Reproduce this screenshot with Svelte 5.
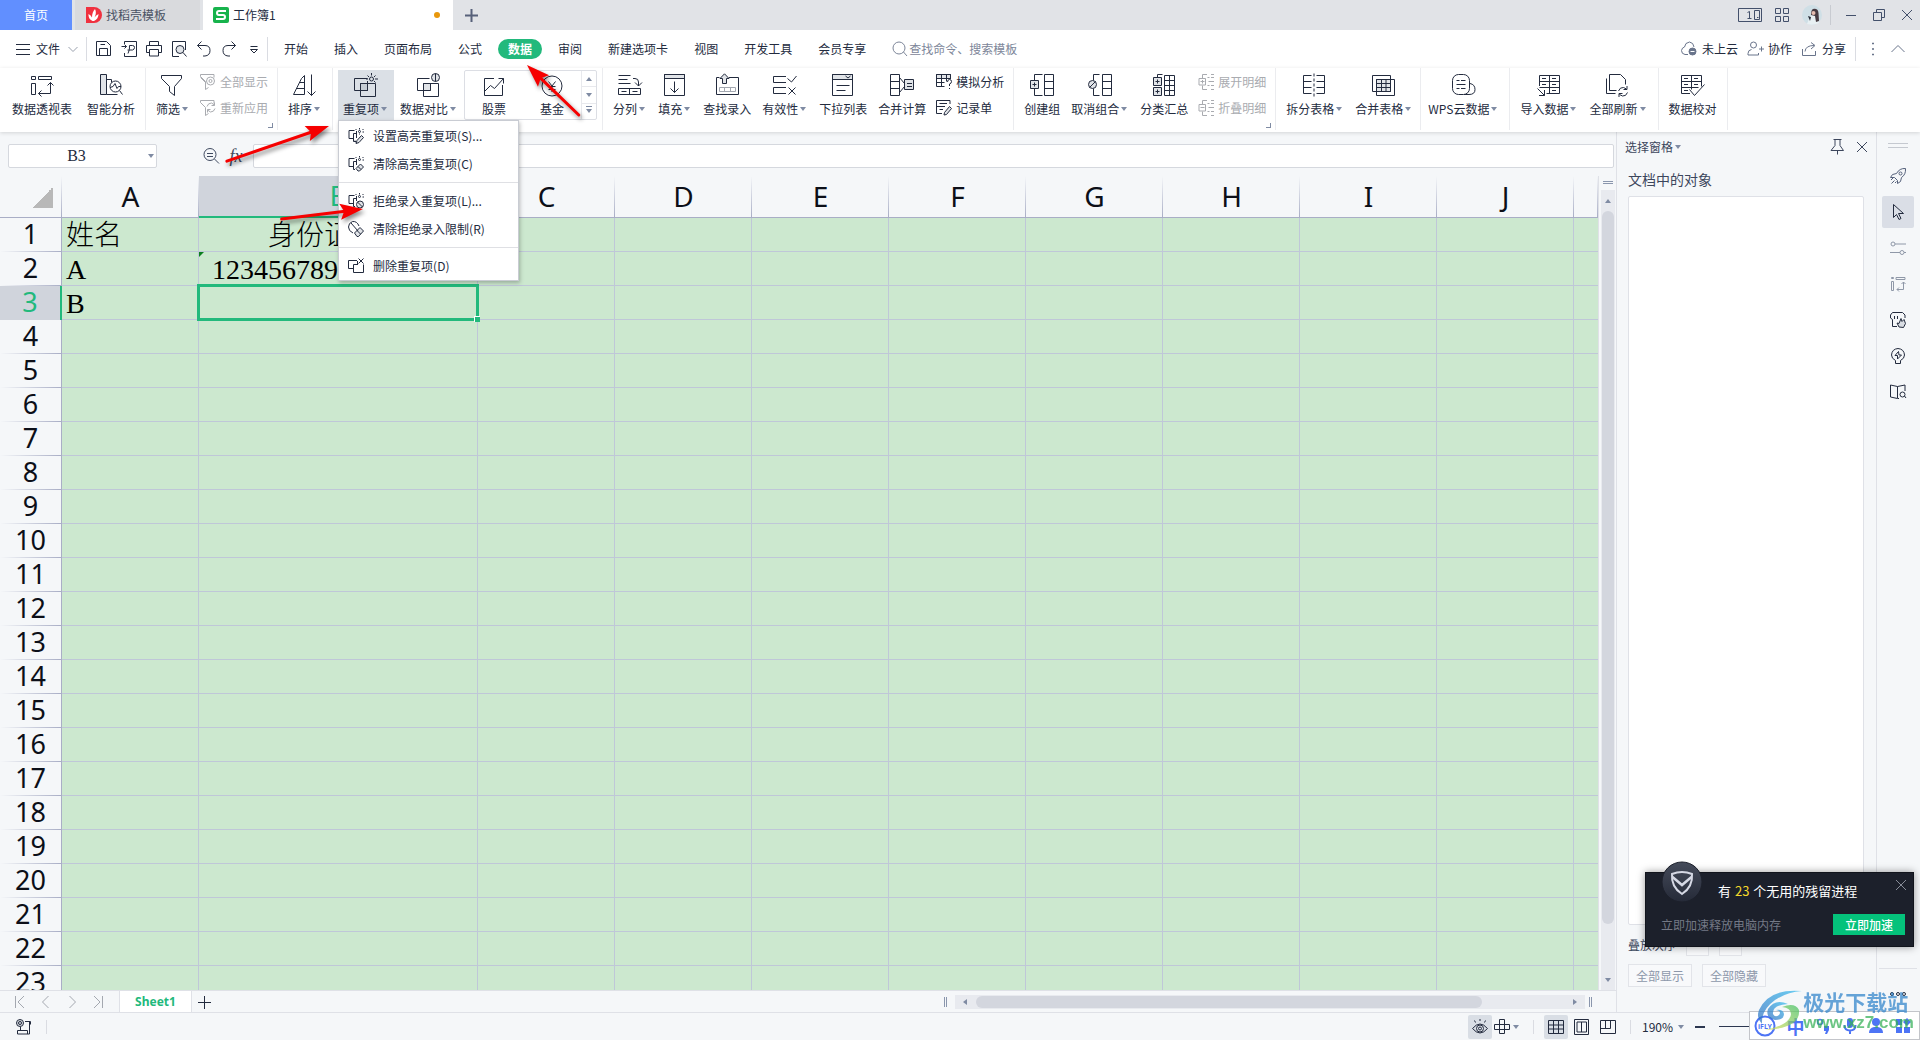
<script lang="ts">
	interface Tool {
		label: string;
		icon: string;
		caret?: boolean;
		active?: boolean;
	}

	const icons: Record<string, string> = {
		pivot: '<path d="M1.5 3.5h4v3h-4zM8.5 3.5h13v3h-13zM1.5 10.5h4v11h-4zM8.5 20.5h12V9.5M11.5 17.5l-3 3 3 3M17.5 12.5l3-3 3 3"/>',
		analyze: '<path class="fill" d="M1.5 1.5h6v20h-6z"/><path d="M7.5 6.5h5M7.5 21.5h11M12.5 6.5v3"/><circle cx="16.5" cy="13.5" r="5.5"/><path d="M20.5 17.5l3 4M11 14.5l3-1 2-3 2 5 1.5-2H22"/>',
		filter: '<path d="M.5 2.5h20v3l-7 8v9l-5-4v-5l-8-8z"/>',
		sort: '<path d="M11.5 2.5v19H.5l8-16zM6.5 9.5h5M3.5 15.5h8M18.5 1.5v21M14.5 18.5l4 4 4-4"/>',
		dup: '<path class="fill" d="M6.5 10.5h7v7h-7z"/><path d="M13.5 5.5H.5v12h6M13.5 8v9.5h-7M6.5 10.5h15v13h-15zM13.5 17.5v-7"/><circle cx="17.5" cy="6" r="2"/><path d="M17.5 0v2.500M12 6h2M21 6h3M13.5 2.5l1.5 1.5M21.5 2.5L20 4M20 8l1.5 1.5"/>',
		compare: '<path class="fill" d="M6.5 10.5h7v7h-7z"/><path d="M12.5 5.5H.5v12h6M6.5 10.5h15v13h-15zM13.5 17.5v-7"/><circle class="fill" cx="18.5" cy="4.5" r="4"/><path d="M18.5.5v8"/>',
		stock: '<path d="M12 5.5H2.5v17h18V12M2.5 18.5l6-6 4 3 9-10M16.5 5.5h5v5"/>',
		fund: '<circle cx="12" cy="13" r="10"/><path d="M8.5 8.5l3.5 4.5 3.5-4.5M12 13v6M8.5 13.5h7M8.5 16.5h7"/>',
		split: '<path d="M.5 2.5h12M.5 6.5h9M.5 10.5h12M15 5.5h2q3.5 0 3.5 3.5v4M17 9.5l3.5 3.5 3.5-3.5M.5 15.5h22v6H.5zM11.5 15.5v6M3.5 18.5h5M14.5 18.5h5"/>',
		fill: '<path class="fill" d="M1.5 1.5h20v4h-20z"/><path d="M1.5 1.5h20v21h-20zM11.5 8.5v11M7.5 15.5l4 4 4-4"/>',
		lookup: '<path d="M4.5 4.5h-3v17h22v-17H14"/><path class="fill" d="M9.5.8L5 5.5h2.5v5h4v-5H14z"/><path class="soft" d="M4.5 14.5h16v4h-16zM9.5 14.5v4M15.5 14.5v4"/>',
		valid: '<path d="M13 3.5H.5v6H13M13 14.5H.5v6H13M14.5 5.5l4 3.5 5-6M15.5 14.5l7 7M22.5 14.5l-7 7"/>',
		dropdown: '<path class="fill" d="M1.5 1.5h20v5h-20z"/><path d="M1.5 1.5h20v21h-20zM14.5 3l2.5 2 2.5-2M5.5 12.5h13M5.5 17.5h9"/>',
		consolidate: '<path d="M.5 1.5h9v21h-9zM.5 8.5h9M.5 15.5h9M9.5 4.5l5 6M9.5 19.5l5-6"/><path class="fill" d="M14.5 6.5h9v10h-9z"/><path d="M17 10.5h5M17 13.5h5"/>',
		group: '<path d="M12.5 1.5h-8v6M4.5 15.5v7h8M14.5 1.5h9v21h-9zM14.5 8.5h9M14.5 15.5h9"/><path class="fill" d="M.5 7.5h8v8h-8z"/><path d="M4.5 9.5v4M2.5 11.5h4"/>',
		ungroup: '<path d="M11.5 1.5h-6v6M5.5 15.5v7h6M14.5 1.5h9v21h-9zM14.5 8.5h9M14.5 15.5h9"/><circle class="fill" cx="4.5" cy="11.5" r="4"/><path d="M1.5 14.5l6-6"/>',
		subtotal: '<path class="fill" d="M1.5 4.5h8v8h-8zM1.5 14.5h8v8h-8z"/><path d="M5.5 6.5v4M3.5 8.5h4M5.5 16.5v4M3.5 18.5h4M5.5 4V1.5h5M12.5 2.5h10v20h-10zM17.5 2.5v20M12.5 7.5h10M12.5 12.5h10M12.5 17.5h10"/>',
		splitTable: '<path d="M8.5 2.5h-8v18h8M.5 8.5h8M.5 14.5h8M13.5 2.5h8v18h-8M13.5 8.5h8M13.5 14.5h8"/><path stroke-dasharray="3 2" d="M11 .5v23"/>',
		mergeTable: '<path class="fill" d="M4.5 6.5h14v12h-14z"/><path d="M18.5 6.5v-4H.5v16h4M4.5 6.5h18v16h-18zM18.5 6.5v12h-14M9.5 6.5v12M14 6.5v12M4.5 10.5h14M4.5 14.5h14"/>',
		cloudData: '<rect x=".5" y="1.5" width="17" height="20" rx="6"/><path d="M18 10.5q5 1 5 6t-6 5h-5M4.5 7.5h3M9 7.5h4.5M4.5 11.5h9M4.5 15.5h3M9 15.5h4.5"/>',
		importData: '<path d="M2.5 13V2.5h20v18h-13M12.5 2.5v18M2.5 8.5h20M2.5 14.5h20M5 5.5h4M15 5.5h4M5 11.5h4M15 11.5h4M15 17.5h4M.5 15.5l7 7M7.5 17v5.5H2"/>',
		refresh: '<path d="M.5 5.5v15h9M3.5 1.5h11l5 5v5M3.5 1.5v16h7M12.5 18q1.5-4 5-3.5l3 1.5M21 13v3.5h-3.5M21.5 19.5q-1.5 4-5 3.5l-3-1.5M13 24v-3.5h3.5"/>',
		proof: '<path d="M9 20.5H.5v-18h20v11M10.5 2.5v14M.5 8.5h20M.5 14.5h17M3 5.5h4M13 5.5h4M3 11.5h4M13 11.5h4M3 17.5h4M8.5 16.5l5 6 10-11"/>',
		showAll: '<path d="M14 3.5V.5H.5v2l5 5v8l3-2M.5 3.5l5 5"/><circle cx="10.5" cy="7" r="4"/><circle cx="10.5" cy="7" r="1.5"/>',
		reapply: '<path d="M14 3.5V.5H.5v2l5 5v8l3-2M7 6.5q1-3.5 4.5-3.5l3 2M14.5 2.5v3h-3M15 8.5q-1 3.5-4.5 3.5l-3-2M7.5 12.5v-3h3"/>',
		whatIf: '<path class="fill" d="M.5.5h14v4H.5z"/><path d="M14.5 5V.5H.5v12h8M.5 4.5h11M.5 8.5h8M5.5.5v12M10.5.5v7M11.5 8q0-2.500 2-2.500t2 2-2 2.500v2M13.5 14v1"/>',
		form: '<path class="fill" d="M8.5 12.5l5-6 2 2-5 6-2.5.5z"/><path d="M14 4V.5H.5v13H6M3.5 3.5H11M.5 6.5H9M3.5 9.5H7"/>',
		expand: '<path d="M9 .5H4.5v4M4.5 11.5v4H9M1 4.5h6.5v6.5H1zM4.5 6v3.5M2.5 7.5h4M9.5 3.5h2M13 3.5h3M10.5 7.5H16M9.5 11.5h2M13 11.5h3M13 15.5h3M13 .5h3"/>',
		collapse: '<path d="M9 .5H4.5v4M4.5 11.5v4H9M1 4.5h6.5v6.5H1zM2.5 7.5h4M9.5 3.5h2M13 3.5h3M10.5 7.5H16M9.5 11.5h2M13 11.5h3M13 15.5h3M13 .5h3"/>',
		save: '<path d="M.5.5h10l4 4v10H.5zM3.5 14V7.5h8V14M4.5 3.5H9"/>',
		exportPdf: '<path d="M3.5 3V.5h12v15h-12V12M.5 5.5h5M3.5 3.5l2 2-2 2M7 12.5q2-4 1.5-8h3q2 0 2 2t-2 2.500h-5"/>',
		print: '<path d="M3.5 4.5v-4h9v4M3.5 11.5h-3v-7h15v7h-3M3.5 8.5h9V15h-9z"/>',
		preview: '<path d="M14.5 9V.5h-13v15H8"/><circle class="fill" cx="9" cy="8.5" r="4"/><path d="M12 11.5l3.5 4"/>',
		undo: '<path d="M5.5.5l-4 4 4 4M1.5 4.5H9q5 0 5 5T9 15H7"/>',
		redo: '<path d="M10.5.5l4 4-4 4M14.5 4.5H7q-5 0-5 5T7 15h2"/>',
		more: '<path d="M4.5 5.5h7M4.5 8.5h7L8 12z"/>',
		dupSet: '<path d="M6.5 2.5H1v8h4M5.5 5.5h3M5.5 5.5v8H7M8.5 3v7M11.5 0v1.5M7.5 1l1 1M15.5 1l-1 1M11.5 5.5v1M14.5 4H16M7 12.5l1 2"/><circle cx="11.5" cy="3.5" r="1"/><path class="fill" d="M8 15.5l1-3 4.5-5 2 2-4.5 5z"/>',
		dupClear: '<path d="M6.5 2.5H1v8h4M5.5 5.5h3M5.5 5.5v8H7M8.5 3v6M11.5 0v1.5M7.5 1l1 1M15.5 1l-1 1M14.5 4H16"/><circle cx="11.5" cy="3.5" r="1"/><path class="fill" d="M8 12.5L12.500 8l3 3-4 4H10z"/><path d="M10 10.5l3 3"/>',
		dupReject: '<path d="M6.5 2.5H1v8h4M5.5 5.5h3M5.5 5.5v8H7M8.5 3v5M11.5 0v1.5M7.5 1l1 1M15.5 1l-1 1M14.5 4H16"/><circle cx="11.5" cy="3.5" r="1"/><circle class="fill" cx="12" cy="11.5" r="3.5"/><path d="M9.5 9l5 5"/>',
		rejectClear: '<path d="M5 12Q.5 10 .5 6T4.5.5Q9 0 11 5M3 2l7 8"/><path class="fill" d="M6.5 12L12 6.5l3.5 3.5-5 5.5H9z"/><path d="M9 9.5l3.5 3.5"/>',
		dupDelete: '<path d="M9 2.5H.5v8h5M10 6.5H5.5v8h10v-8M9.5 6V3M10.5.5l5 5M15.5.5l-5 5"/>',
		rocket: '<path d="M15.5.5q-6-.5-9 5l-4 1-2 3h4l3 3v3l3-2 1-4q4.5-3 4-9zM1 12l2-2M1.5 15.5l3-3M5 15l1.5-1.5"/><circle cx="10.5" cy="5.5" r="1.5"/>',
		cursor: '<path d="M3.5.5v13l3-3 2.5 5 2-1-2.5-5h5z"/>',
		sliders: '<circle cx="3" cy="4" r="2"/><circle cx="12" cy="12.5" r="2"/><path d="M5 4h11M0 12.5h10M14 12.5h2"/>',
		pivotSmall: '<path d="M1.5 1.5h2v1h-2zM6 1.5h9v2H6zM1.5 5.5h2v9h-2zM7 13.5h6.5V6M9 11.5l-2 2 2 2M11.5 8l2-2 2 2"/>',
		skin: '<path d="M7 14.5H2.5v-7L.5 6V3l2-2.500h10L15 3v3M4.5 4v3M7.5 4v3"/><path class="fill" d="M9 15l-2-4 2 .5 2-5 1 3 2-2 1.5 4-2 4z"/>',
		idea: '<path d="M5.5 12.5Q1.5 10.5 1.5 7 2 1 8 .5q6 .5 6.5 6.5 0 3.5-4 5.5v3h-5zM8.5 3.5l-3.500 4h2.5V11l4-4H9z"/>',
		book: '<path d="M7.500 2.500L.5 1v12l7 1.500zl7.500-1.500v6M8 14.500h1"/><circle cx="12.5" cy="10.5" r="2.5"/><path d="M14.5 12l1.5 2"/>',
		pin: '<path d="M4.5.5h8M6 .5v6l-4 5h12.5l-3.500-5v-6M8.5 11.5v4"/>',
		close: '<path d="M3 3l10 10M13 3L3 13"/>',
		zoomOut: '<circle cx="7" cy="6.5" r="6"/><path d="M11.5 11l4.5 4.5M4 5.5h6M4 8.5h6"/>',
		search: '<circle cx="7" cy="7" r="6"/><path d="M11.5 11l3.5 4"/>',
		cloud: '<path d="M7 13.5H4Q.5 13 .5 9.5 1 6.500 3.5 6q.5-4.500 5-5 4 .5 4.500 5"/><circle class="solid" cx="11.5" cy="10.5" r="3.5"/><path stroke="#fff" d="M9.5 10.5h4"/>',
		team: '<circle cx="6.5" cy="4" r="3"/><path d="M4.5 8.5Q1 9 1 12.500V14h10.500v-2M14.5 5.5v5M12 8h5"/>',
		share: '<path d="M1.5 8v6.5h13V10M4 10.500q.5-6 9-6M10 1.5l4 3L10 8"/>',
		eye: '<path d="M.5 9.5q7.5-9 15 0-7.500 9-15 0zM8 0v2M2.5 1.5l1 2M13.5 1.5l-1 2"/><circle cx="8" cy="9.5" r="3.5"/><circle cx="8" cy="9.5" r="1.5"/>',
		cross: '<path d="M.5 5.5h15v5H.5zM5.5.5h5v14h-5z"/>',
		gridView: '<path d="M.5 1.5h15v13H.5zM.5 6h15M.5 10h15M5.5 1.5v13M10.5 1.5v13"/>',
		pageView: '<path d="M.5.5h14v15H.5zM3 3h9.5v10H3zM7.5 3v10"/>',
		breakView: '<path d="M.5 1.5h15v13H.5zM.5 9.5h10v-8M5.5 1.5v8"/>',
		macro: '<circle class="fill" cx="4" cy="4" r="3.5"/><circle cx="4" cy="4" r="1.5"/><path d="M9 2.5h5.500v3M13.5 3v12h-12v-3.500h10V15M4.5 8v3.5"/>',
		first: '<path d="M3.500 2v12M12 2L6 8l6 6"/>',
		prev: '<path d="M10.5 2l-6 6 6 6"/>',
		next: '<path d="M5.5 2l6 6-6 6"/>',
		last: '<path d="M12.5 2v12M4 2l6 6-6 6"/>',
		plus: '<path d="M2 8.5h13M8.5 2v13"/>',
		apps: '<path d="M1.5 1.5h5v5h-5zM9.5 1.5h5v5h-5zM1.5 9.5h5v5h-5zM9.5 9.5h5v5h-5z"/>',
		minimize: '<path d="M3 8.5h10"/>',
		restore: '<path d="M2.5 5.5h8v8h-8zM5.5 5V2.5h8v8H11"/>',
		up: '<path d="M1.5 11L8 4.5l6.500 6.500"/>',
		down: '<path d="M3.5 6L8 10.5 12.5 6"/>',
		dots: '<path class="solid" d="M7.5 2h1v1h-1zM7.5 7.5h1v1h-1zM7.5 13h1v1h-1z"/>',
		lines: '<path d="M1 3.5h14M1 8.5h14M1 13.5h14"/>'
	};

	const quickTools = [
		['save', '保存'],
		['exportPdf', '输出为PDF'],
		['print', '打印'],
		['preview', '打印预览'],
		['undo', '撤销'],
		['redo', '恢复'],
		['more', '更多']
	];

	const menus = ['开始', '插入', '页面布局', '公式', '数据', '审阅', '新建选项卡', '视图', '开发工具', '会员专享'];
	let activeMenu = $state('数据');

	const sortTools: Tool[] = [
		{ label: '重复项', icon: 'dup', caret: true, active: true },
		{ label: '数据对比', icon: 'compare', caret: true }
	];
	const dataTools: Tool[] = [
		{ label: '分列', icon: 'split', caret: true },
		{ label: '填充', icon: 'fill', caret: true },
		{ label: '查找录入', icon: 'lookup' },
		{ label: '有效性', icon: 'valid', caret: true },
		{ label: '下拉列表', icon: 'dropdown' },
		{ label: '合并计算', icon: 'consolidate' }
	];
	const groupTools: Tool[] = [
		{ label: '创建组', icon: 'group' },
		{ label: '取消组合', icon: 'ungroup', caret: true },
		{ label: '分类汇总', icon: 'subtotal' }
	];
	const tableTools: Tool[] = [
		{ label: '拆分表格', icon: 'splitTable', caret: true },
		{ label: '合并表格', icon: 'mergeTable', caret: true }
	];
	const importTools: Tool[] = [
		{ label: '导入数据', icon: 'importData', caret: true },
		{ label: '全部刷新', icon: 'refresh', caret: true }
	];

	const dupMenu = [
		[
			{ label: '设置高亮重复项(S)...', icon: 'dupSet' },
			{ label: '清除高亮重复项(C)', icon: 'dupClear' }
		],
		[
			{ label: '拒绝录入重复项(L)...', icon: 'dupReject' },
			{ label: '清除拒绝录入限制(R)', icon: 'rejectClear' }
		],
		[{ label: '删除重复项(D)', icon: 'dupDelete' }]
	];

	const columns = ['A', 'B', 'C', 'D', 'E', 'F', 'G', 'H', 'I', 'J'];
	const rows = Array.from({ length: 23 }, (_, i) => i + 1);
	const cells: Record<string, string> = {
		A1: '姓名',
		B1: '身份证号码',
		A2: 'A',
		B2: '123456789012345678',
		A3: 'B'
	};

	const sideTools = [
		{ icon: 'rocket', label: '快捷', tone: 'mid' },
		{ icon: 'cursor', label: '选择', tone: 'on' },
		{ icon: 'sliders', label: '属性', tone: 'dim' },
		{ icon: 'pivotSmall', label: '透视表', tone: 'dim' },
		{ icon: 'skin', label: '素材', tone: '' },
		{ icon: 'idea', label: '技巧', tone: '' },
		{ icon: 'book', label: '帮助', tone: '' }
	];

	// tip position, direction and shaft length of the red pointers
	const pointers = [
		{ x: 329, y: 126, angle: -19, length: 108 },
		{ x: 363, y: 209, angle: -7, length: 82 },
		{ x: 527, y: 65, angle: -136, length: 72 }
	];

	let nameBox = $state('B3');
	let formula = $state('');
	let zoom = $state(190);
	let toastOpen = $state(true);
</script>

{#snippet icon(name: string, size = 16)}
	<svg class="icon" width={size} height={size} viewBox="0 0 {size} {size}" aria-hidden="true">{@html icons[name]}</svg>
{/snippet}

{#snippet tool(item: Tool)}
	<button class="tool" class:active={item.active}>
		{@render icon(item.icon, 24)}
		<span class="label">{item.label}{#if item.caret}<i class="caret"></i>{/if}</span>
	</button>
{/snippet}

{#snippet stack(a: Tool, b: Tool, disabled: boolean)}
	<div class="stack">
		{#each [a, b] as item}
			<button {disabled}>{@render icon(item.icon)}{item.label}</button>
		{/each}
	</div>
{/snippet}

<div class="app">
	<header class="titlebar">
		<button class="tab home">首页</button>
		<button class="tab template">
			<svg width="16" height="16" viewBox="0 0 16 16" aria-hidden="true">
				<path fill="#f0313f" d="M0 0h8a8 8 0 0 1 0 16H0z" />
				<path fill="#fff" d="M6.500 14Q2 12 2.500 7 5 8 6 10.500 6 5 9 2q2 4-.5 8.500Q10 8 12.500 7 12.500 12 8 14z" />
			</svg>
			找稻壳模板
		</button>
		<button class="tab book">
			<svg width="16" height="16" viewBox="0 0 16 16" aria-hidden="true">
				<rect width="16" height="16" rx="2" fill="#17b34c" />
				<path fill="none" stroke="#fff" stroke-width="2" d="M13 4H6Q4 4 4 6t2 2h4q2 0 2 2t-2 2H3" />
			</svg>
			工作簿1
			<i class="unsaved"></i>
		</button>
		<button class="new-tab" aria-label="新建">{@render icon('plus')}</button>
		<div class="window">
			<button aria-label="窗口">
				<svg class="icon" width="24" height="14" viewBox="0 0 24 14" aria-hidden="true">
					<path d="M.5.5h23v13H.5zM21.5 2.5h-5v9h5zM19 9.5h1.500M9.5 4.5l2-1v7M9.5 10.5h4" />
				</svg>
			</button>
			<button aria-label="应用">{@render icon('apps')}</button>
			<button aria-label="账号">
				<svg width="20" height="20" viewBox="0 0 20 20" aria-hidden="true">
					<circle cx="10" cy="10" r="10" fill="#cfdfe6" />
					<path fill="#e8f0f3" d="M5 19l3-8 6-2 3 9q-6 3-12 1z" />
					<path fill="#473b42" d="M11 4q5-1 5.500 4l.5 8-3 1-1-6-4-1q0-5 2-6z" />
					<circle cx="11.5" cy="8" r="2" fill="#e6bdb0" />
					<path fill="#272d38" d="M6 11l3 1-1 4z" />
				</svg>
			</button>
			<i class="bar"></i>
			<button aria-label="最小化">{@render icon('minimize')}</button>
			<button aria-label="还原">{@render icon('restore')}</button>
			<button aria-label="关闭">{@render icon('close')}</button>
		</div>
	</header>

	<nav class="menubar">
		<button class="file">{@render icon('lines')}文件{@render icon('down')}</button>
		<i class="bar"></i>
		<div class="quick">
			{#each quickTools as [name, label]}
				<button aria-label={label}>{@render icon(name)}</button>
			{/each}
		</div>
		<i class="bar"></i>
		<div class="menus">
			{#each menus as menu}
				<button class:on={menu === activeMenu} onclick={() => (activeMenu = menu)}>{menu}</button>
			{/each}
		</div>
		<label class="search">
			{@render icon('search')}
			<input type="text" placeholder="查找命令、搜索模板" />
		</label>
		<div class="account">
			<button>{@render icon('cloud')}未上云</button>
			<button>{@render icon('team')}协作</button>
			<button>{@render icon('share')}分享</button>
			<i class="bar"></i>
			<button aria-label="更多">{@render icon('dots')}</button>
			<button aria-label="收起功能区">{@render icon('up')}</button>
		</div>
	</nav>

	<section class="ribbon">
		<div class="wide">
			{@render tool({ label: '数据透视表', icon: 'pivot' })}
			{@render tool({ label: '智能分析', icon: 'analyze' })}
		</div>
		<i class="sep"></i>
		{@render tool({ label: '筛选', icon: 'filter', caret: true })}
		{@render stack({ label: '全部显示', icon: 'showAll' }, { label: '重新应用', icon: 'reapply' }, true)}
		<i class="sep corner"></i>
		{@render tool({ label: '排序', icon: 'sort', caret: true })}
		<i class="sep"></i>
		<div class="menu-anchor">
			{@render tool(sortTools[0])}
			<div class="dropdown" role="menu">
				{#each dupMenu as section}
					<div class="section">
						{#each section as item}
							<button role="menuitem">{@render icon(item.icon)}{item.label}</button>
						{/each}
					</div>
				{/each}
			</div>
		</div>
		{@render tool(sortTools[1])}
		<div class="gallery">
			{@render tool({ label: '股票', icon: 'stock' })}
			{@render tool({ label: '基金', icon: 'fund' })}
			<div class="spin">
				<button aria-label="上一行"><i class="tri up"></i></button>
				<button aria-label="下一行"><i class="tri"></i></button>
				<button aria-label="展开" class="all"><i class="tri"></i></button>
			</div>
		</div>
		<i class="sep"></i>
		{#each dataTools as item}{@render tool(item)}{/each}
		{@render stack({ label: '模拟分析', icon: 'whatIf' }, { label: '记录单', icon: 'form' }, false)}
		<i class="sep"></i>
		{#each groupTools as item}{@render tool(item)}{/each}
		{@render stack({ label: '展开明细', icon: 'expand' }, { label: '折叠明细', icon: 'collapse' }, true)}
		<i class="sep corner"></i>
		{#each tableTools as item}{@render tool(item)}{/each}
		<i class="sep tight"></i>
		{@render tool({ label: 'WPS云数据', icon: 'cloudData', caret: true })}
		<i class="sep"></i>
		{#each importTools as item}{@render tool(item)}{/each}
		<i class="sep"></i>
		{@render tool({ label: '数据校对', icon: 'proof' })}
		<i class="sep"></i>
	</section>

	<div class="work">
		<main>
			<div class="formula">
				<div class="name-box">
					<input aria-label="名称框" bind:value={nameBox} />
					<i class="tri"></i>
				</div>
				<button aria-label="浏览公式" class="look">{@render icon('zoomOut')}</button>
				<button class="fx">fx</button>
				<input class="formula-input" aria-label="编辑栏" bind:value={formula} />
			</div>

			<div class="sheet">
				<div class="grid">
					<table>
						<colgroup>
							<col class="c-head" />
							{#each columns as col}
								<col class:c-wide={col === 'B'} class:c-std={col !== 'B'} />
							{/each}
							<col />
						</colgroup>
						<thead>
							<tr>
								<th class="all-cells"><i></i></th>
								{#each columns as col}
									<th class:sel={col === 'B'}>{col}</th>
								{/each}
								<th></th>
							</tr>
						</thead>
						<tbody>
							{#each rows as row}
								<tr>
									<th class:sel={row === 3}>{row}</th>
									{#each columns as col}
										<td class:center={col === 'B'} class:flag={col + row === 'B2'} class:current={col + row === nameBox}>{cells[col + row] ?? ''}</td>
									{/each}
									<td></td>
								</tr>
							{/each}
						</tbody>
					</table>
				</div>
				<div class="vscroll">
					<i class="split-grip"></i>
					<button aria-label="向上滚动"><i class="tri up"></i></button>
					<div class="lane"><i class="thumb"></i></div>
					<button aria-label="向下滚动"><i class="tri"></i></button>
				</div>
			</div>

			<div class="sheets">
				<div class="nav">
					<button aria-label="第一个">{@render icon('first')}</button>
					<button aria-label="上一个">{@render icon('prev')}</button>
					<button aria-label="下一个">{@render icon('next')}</button>
					<button aria-label="最后一个">{@render icon('last')}</button>
				</div>
				<button class="sheet-tab">Sheet1</button>
				<button class="add" aria-label="新建工作表">{@render icon('plus')}</button>
				<i class="grip"></i>
				<div class="hscroll">
					<button aria-label="向左滚动"><i class="tri left"></i></button>
					<div class="lane"><i class="thumb"></i></div>
					<button aria-label="向右滚动"><i class="tri right"></i></button>
				</div>
				<i class="grip end"></i>
			</div>
		</main>

		<aside class="panel">
			<div class="panel-head">
				<button>选择窗格<i class="caret"></i></button>
				<span class="spacer"></span>
				<button aria-label="固定">{@render icon('pin')}</button>
				<button aria-label="关闭窗格">{@render icon('close')}</button>
			</div>
			<h2>文档中的对象</h2>
			<div class="objects"></div>
			<div class="order">
				<span>叠放次序</span>
				<button aria-label="上移"><i class="tri up"></i></button>
				<button aria-label="下移"><i class="tri"></i></button>
			</div>
			<div class="visibility">
				<button>全部显示</button>
				<button>全部隐藏</button>
			</div>
		</aside>

		<aside class="rail">
			<i class="handle"></i>
			{#each sideTools as item}
				<button class={item.tone} aria-label={item.label}>{@render icon(item.icon)}</button>
			{/each}
			<span class="spacer"></span>
			<div class="rail-more">
				<button aria-label="更多">
					<svg class="icon" width="16" height="6" viewBox="0 0 16 6" aria-hidden="true">
						<circle cx="2" cy="3" r="1.5" /><circle cx="8" cy="3" r="1.5" /><circle cx="14" cy="3" r="1.5" />
					</svg>
				</button>
			</div>
		</aside>
	</div>

	<footer class="status">
		<button aria-label="宏">{@render icon('macro')}</button>
		<i class="bar"></i>
		<span class="spacer"></span>
		<button class="on" aria-label="护眼模式">{@render icon('eye')}</button>
		<button class="reading" aria-label="阅读模式">{@render icon('cross')}<i class="caret"></i></button>
		<i class="bar"></i>
		<div class="views">
			<button class="on" aria-label="普通视图">{@render icon('gridView')}</button>
			<button aria-label="页面布局视图">{@render icon('pageView')}</button>
			<button aria-label="分页预览">{@render icon('breakView')}</button>
		</div>
		<i class="bar"></i>
		<button class="percent">{zoom}%<i class="caret"></i></button>
		<button class="minus" aria-label="缩小" onclick={() => (zoom -= 10)}></button>
		<input type="range" min="10" max="400" aria-label="缩放" bind:value={zoom} />
	</footer>

	{#if toastOpen}
		<div class="toast">
			<svg class="shield" width="44" height="44" viewBox="0 0 44 44" aria-hidden="true">
				<defs>
					<linearGradient id="ball" x2="0" y2="1">
						<stop stop-color="#454b5a" />
						<stop offset="1" stop-color="#252a38" />
					</linearGradient>
				</defs>
				<circle cx="22" cy="22" r="20" fill="url(#ball)" stroke="#1c202b" />
				<path fill="none" stroke="#d5d8e4" stroke-width="2" d="M12 14q10-4 20 0 1 13-10 20-11-7-10-20z" />
				<path fill="none" stroke="#d5d8e4" stroke-width="2.5" d="M12.5 17l9.500 8 9.500-8" />
			</svg>
			<p class="title">有 <b>23</b> 个无用的残留进程</p>
			<button class="toast-close" aria-label="关闭提示" onclick={() => (toastOpen = false)}>{@render icon('close')}</button>
			<div class="toast-foot">
				<span>立即加速释放电脑内存</span>
				<button>立即加速</button>
			</div>
		</div>
	{/if}

	<div class="ime">
		<svg width="22" height="22" viewBox="0 0 22 22" aria-hidden="true">
			<circle cx="11" cy="11" r="9.5" fill="none" stroke="#4d74f5" stroke-width="2" />
			<text x="11" y="14" text-anchor="middle">iFLY</text>
		</svg>
		<span>中</span>
		<svg width="16" height="16" viewBox="0 0 16 16" aria-hidden="true">
			<circle cx="5" cy="4" r="2.5" fill="none" stroke="#4d74f5" stroke-width="1.5" />
			<path fill="#4d74f5" d="M9 8h5v4l-2 4h-2l1-3H9z" />
		</svg>
		<svg width="16" height="16" viewBox="0 0 16 16" aria-hidden="true">
			<rect x="5" y="0" width="6" height="10" rx="3" fill="#4d74f5" />
			<path fill="none" stroke="#4d74f5" stroke-width="2" d="M2.5 7q0 5.500 5.500 5.500T13.500 7M8 12v4" />
		</svg>
		<svg width="16" height="16" viewBox="0 0 16 16" aria-hidden="true">
			<circle cx="8" cy="4" r="4" fill="#4d74f5" />
			<path fill="#4d74f5" d="M1 15q0-5 5-6h4q5 1 5 6z" />
		</svg>
		<svg width="16" height="16" viewBox="0 0 16 16" aria-hidden="true">
			<path fill="#4d74f5" d="M1 1h6v6H1zM12 0l4 4-4 4-4-4zM1 9h6v6H1zM9 9h6v6H9z" />
		</svg>
	</div>

	<div class="brand">
		<svg width="46" height="42" viewBox="0 0 46 42" aria-hidden="true">
			<defs>
				<linearGradient id="sky" x1="1" x2="0" y2="1">
					<stop stop-color="#35bdf0" />
					<stop offset="1" stop-color="#2f6fc0" />
				</linearGradient>
				<linearGradient id="leaf" x1="1" x2="0" y2="1">
					<stop stop-color="#3fbf62" />
					<stop offset="1" stop-color="#e3e05a" />
				</linearGradient>
			</defs>
			<path fill="url(#sky)" d="M45 1Q12-2 2 20q-3 8 3 14-1-14 13-24Q30 2 45 1z" />
			<path fill="url(#sky)" d="M31 14Q18 8 11 19q-3 9 7 11 9 0 9-6-1-5-8-4 6 1 3 5-4 3-6-1-1-9 15-10z" />
			<path fill="url(#leaf)" d="M25 17q13-5 17 3 2 18-34 20 25-5 26-16 0-6-9-7z" />
		</svg>
		<div>
			<strong>极光下载站</strong>
			<em>www.xz7.com</em>
		</div>
	</div>

	<svg class="pointers" width="600" height="240" viewBox="0 0 600 240" aria-hidden="true">
		{#each pointers as p}
			<g transform="translate({p.x} {p.y}) rotate({p.angle})">
				<path stroke="#f60000" stroke-width="3" stroke-linecap="round" d="M{-p.length} 0H-16" />
				<path fill="#f60000" d="M0 0L-23-8-19 0-23 8z" />
			</g>
		{/each}
	</svg>
</div>

<style>
	:global(body) {
		margin: 0;
		overflow: hidden;
	}

	.app {
		height: 100vh;
		display: flex;
		flex-direction: column;
		position: relative;
		font-family: "Noto Sans CJK SC", sans-serif;
		font-size: 12px;
		line-height: 18px;
		color: #232b3e;
		background: #f5f7f9;
	}

	button,
	input {
		font: inherit;
		color: inherit;
		border: 0;
		padding: 0;
		background: none;
		min-width: 0;
		box-sizing: border-box;
	}

	input {
		outline: none;
	}

	button {
		display: flex;
		align-items: center;
		justify-content: center;
		white-space: nowrap;
	}

	.icon {
		display: block;
		flex: none;
		overflow: visible;
		fill: none;
		stroke: currentColor;
		stroke-width: 1;
	}

	.icon :global(.fill) {
		fill: rgba(120, 130, 150, 0.22);
	}

	.icon :global(.soft) {
		stroke: #a2a7b0;
	}

	.icon :global(.solid) {
		fill: currentColor;
	}

	.spacer {
		flex: 1;
	}

	.bar {
		width: 1px;
		background: #dadce2;
		flex: none;
	}

	.tri,
	.caret {
		display: inline-block;
		flex: none;
		border: 3px solid transparent;
		border-top: 4px solid #7f8ba3;
		border-bottom: 0;
	}

	.caret {
		margin: 0 2px;
	}

	.tri.up {
		border-top: 0;
		border-bottom: 4px solid #7f8ba3;
	}

	.tri.left {
		border: 3px solid transparent;
		border-right: 4px solid #7f8ba3;
		border-left: 0;
	}

	.tri.right {
		border: 3px solid transparent;
		border-left: 4px solid #7f8ba3;
		border-right: 0;
	}

	/* title bar */
	.titlebar {
		display: flex;
		height: 30px;
		flex: none;
		background: #e1e3e7;
	}

	.tab {
		gap: 4px;
		justify-content: flex-start;
		margin-left: 3px;
	}

	.home {
		width: 72px;
		margin: 0;
		justify-content: center;
		background: #618fff;
		color: #fff;
	}

	.template {
		width: 125px;
		padding-left: 11px;
		background: #d9dadd;
		color: #4a5264;
	}

	.book {
		width: 250px;
		padding: 0 13px 0 10px;
		background: #fff;
	}

	.unsaved {
		width: 6px;
		height: 6px;
		margin-left: auto;
		border-radius: 50%;
		background: #e8970c;
	}

	.new-tab {
		width: 36px;
	}

	.new-tab .icon {
		stroke-width: 2;
		color: #57617a;
	}

	.window {
		display: flex;
		align-items: center;
		margin-left: auto;
		gap: 12px;
		padding-right: 5px;
		color: #43506b;
	}

	.window .bar {
		height: 20px;
		margin-left: -4px;
		background: #c8cbd1;
	}

	/* menu row */
	.menubar {
		display: flex;
		align-items: center;
		height: 38px;
		flex: none;
		background: #fff;
	}

	.menubar .bar {
		height: 24px;
	}

	.file {
		gap: 5px;
		padding: 0 5px 0 15px;
	}

	.file .icon:last-child {
		color: #9aa1ae;
	}

	.quick {
		display: flex;
		padding: 0 1px 0 4px;
	}

	.quick button {
		width: 25px;
		height: 24px;
	}

	.menus {
		display: flex;
		padding-left: 3px;
	}

	.menus button {
		height: 20px;
		padding: 0 10px;
		margin: 0 3px;
		border-radius: 10px;
	}

	.menus .on {
		background: #22b97c;
		color: #fff;
		font-weight: bold;
	}

	.search {
		display: flex;
		align-items: center;
		flex: 1;
		padding-left: 13px;
		color: #7d8699;
	}

	.search input {
		flex: 1;
		margin-left: 1px;
	}

	.search input::placeholder {
		color: #7d8699;
		opacity: 1;
	}

	.account {
		display: flex;
		align-items: center;
		gap: 9px;
		padding-right: 14px;
	}

	.account button {
		gap: 5px;
	}

	.account .icon {
		color: #69748b;
	}

	/* ribbon */
	.ribbon {
		display: flex;
		height: 64px;
		flex: none;
		gap: 1px;
		padding: 0 7px;
		background: #fff;
		box-shadow: 0 1px 4px rgba(0, 0, 0, 0.14);
		position: relative;
		z-index: 2;
	}

	.wide {
		display: flex;
		gap: 5px;
	}

	.tool {
		flex: none;
		flex-direction: column;
		justify-content: flex-start;
		height: 50px;
		margin-top: 2px;
		padding: 3px 5px 0;
		gap: 3px;
	}

	.tool.active {
		background: #dbe0e6;
	}

	.label {
		display: flex;
		align-items: center;
	}

	.sep {
		flex: none;
		width: 1px;
		height: 62px;
		margin: 0 4px;
		background: #ebecef;
		position: relative;
	}

	.sep.tight {
		margin: 0 1px;
	}

	.corner::before {
		content: "";
		position: absolute;
		right: 5px;
		bottom: 2px;
		width: 4px;
		height: 4px;
		border: solid #7f8ba3;
		border-width: 0 1px 1px 0;
	}

	.stack {
		display: flex;
		flex-direction: column;
		flex: none;
		gap: 8px;
		padding: 5px 4px 0;
	}

	.stack button {
		justify-content: flex-start;
		gap: 4px;
	}

	.stack button:disabled {
		color: #a9abb0;
	}

	.menu-anchor {
		position: relative;
	}

	.dropdown {
		position: absolute;
		top: 52px;
		left: 0;
		width: 181px;
		background: #fff;
		border: 1px solid #c9ccd3;
		box-shadow: 1px 2px 4px rgba(0, 0, 0, 0.25);
		box-sizing: border-box;
		padding-top: 1px;
		z-index: 3;
	}

	.section button {
		width: 100%;
		height: 28px;
		padding-left: 9px;
		gap: 9px;
		justify-content: flex-start;
	}

	.section + .section {
		border-top: 1px solid #dfe0e4;
		margin-top: 4px;
		padding-top: 4px;
	}

	.gallery {
		display: flex;
		width: 133px;
		height: 50px;
		flex: none;
		margin-top: 2px;
		border: 1px solid #dcdee4;
		border-radius: 2px;
		box-sizing: border-box;
	}

	.gallery .tool {
		width: 58px;
		margin-top: 0;
		padding-top: 2px;
	}

	.spin {
		flex: 1;
		display: flex;
		flex-direction: column;
		border-left: 1px solid #e8e9ed;
	}

	.spin button {
		flex: 1;
	}

	.spin button + button {
		border-top: 1px solid #e8e9ed;
	}

	.spin .all .tri {
		position: relative;
	}

	.spin .all .tri::before {
		content: "";
		position: absolute;
		left: -3px;
		top: -7px;
		width: 6px;
		height: 1px;
		background: #7f8ba3;
	}

	/* work area */
	.work {
		display: flex;
		flex: 1;
		min-height: 0;
	}

	main {
		flex: 1;
		min-width: 0;
		display: flex;
		flex-direction: column;
	}

	.formula {
		display: flex;
		height: 44px;
		flex: none;
		align-items: center;
		padding: 8px 2px 4px 8px;
		box-sizing: border-box;
	}

	.name-box {
		display: flex;
		align-items: center;
		width: 149px;
		height: 24px;
		box-sizing: border-box;
		padding-right: 2px;
		border: 1px solid #d5d8de;
		border-radius: 2px;
		background: #fff;
	}

	.name-box input {
		flex: 1;
		text-align: center;
		font: 16px "Liberation Serif", serif;
		padding-right: 4px;
	}

	.look {
		margin-left: 46px;
		color: #3f4a60;
	}

	.fx {
		width: 34px;
		color: #3f4a60;
		font: italic 18px "Liberation Serif", serif;
	}

	.formula-input {
		flex: 1;
		height: 24px;
		background: #fff;
		border: 1px solid #d5d8de;
		border-radius: 2px;
	}

	.sheet {
		flex: 1;
		display: flex;
		min-height: 0;
	}

	.grid {
		flex: 1;
		min-width: 0;
		overflow: hidden;
		border-right: 1px solid #dfe1e7;
	}

	table {
		width: 100%;
		table-layout: fixed;
		border-spacing: 0;
	}

	.c-head {
		width: 62px;
	}

	.c-std {
		width: 137px;
	}

	.c-wide {
		width: 279px;
	}

	th,
	td {
		box-sizing: border-box;
		padding: 0;
		height: 34px;
		border: 0 solid #bfc7d8;
		border-width: 0 1px 1px 0;
		white-space: nowrap;
	}

	th {
		font: 28px/30px "Noto Sans", sans-serif;
		color: #0c0f18;
		background: linear-gradient(90deg, transparent, #a9aec6) bottom / 100% 1px no-repeat;
		border-width: 0 1px 0 0;
		border-color: #a9aec6;
		padding-bottom: 2px;
	}

	tbody th {
		font-size: 27px;
	}

	thead th {
		height: 42px;
		border-width: 0 0 1px;
		background: linear-gradient(transparent, #a9aec6) right / 1px 100% no-repeat;
	}

	thead .sel {
		color: #22b97c;
		background: #d0d4dc;
		border-bottom: 2px solid #22b97c;
	}

	tbody .sel {
		color: #22b97c;
		background: #d0d4dc;
		border-right: 2px solid #22b97c;
	}

	.all-cells i {
		display: block;
		margin: 4px 9px 0 auto;
		width: 21px;
		height: 21px;
		background: linear-gradient(135deg, transparent 50%, #b8b8b8 50%);
	}

	td {
		background: #cce8cf;
		padding: 2px 0 0 4px;
		font: 28px/31px "Liberation Serif", "Noto Sans CJK SC", serif;
		font-weight: 300;
		color: #000;
		position: relative;
	}

	td:last-child {
		border-right: 0;
	}

	.center {
		padding-left: 0;
		text-align: center;
	}

	.flag::before {
		content: "";
		position: absolute;
		left: 0;
		top: 0;
		border-top: 5px solid #0b7f1f;
		border-right: 5px solid transparent;
	}

	.current::before {
		content: "";
		position: absolute;
		inset: -2px;
		border: 3px solid #22b97c;
		z-index: 1;
	}

	.current::after {
		content: "";
		position: absolute;
		right: -3px;
		bottom: -3px;
		width: 5px;
		height: 5px;
		background: #22b97c;
		border: solid #fff;
		border-width: 1px 0 0 1px;
		z-index: 1;
	}

	.vscroll {
		width: 14px;
		margin: 0 1px 0 2px;
		display: flex;
		flex-direction: column;
		background: #e8eaef;
	}

	.split-grip {
		height: 14px;
		box-sizing: border-box;
		flex: none;
		padding: 5px 2px 6px;
		background: linear-gradient(#8a96ad, #8a96ad) content-box 0 0 / 10px 1px no-repeat, linear-gradient(#8a96ad, #8a96ad) content-box 0 100% / 10px 1px no-repeat, #f5f7f9;
	}

	.vscroll button {
		height: 21px;
		flex: none;
	}

	.vscroll .lane {
		flex: 1;
	}

	.vscroll .thumb {
		display: block;
		width: 12px;
		height: 94%;
		margin: 0 auto;
		border-radius: 6px;
		background: #d3d6de;
	}

	.sheets {
		display: flex;
		align-items: center;
		height: 22px;
		flex: none;
		border-top: 1px solid #dfe1e7;
		box-sizing: border-box;
	}

	.nav {
		display: flex;
		gap: 10px;
		padding: 0 13px 0 12px;
		color: #a4a8b0;
	}

	.sheet-tab {
		width: 73px;
		height: 21px;
		color: #22b97c;
		font-family: "Noto Sans", sans-serif;
		font-weight: bold;
		background: #fff;
		border: solid #dfe1e7;
		border-width: 0 1px;
	}

	.add {
		margin: 0 auto 0 4px;
	}

	.grip {
		width: 1px;
		height: 10px;
		flex: none;
		border: solid #8a96ad;
		border-width: 0 1px;
	}

	.grip.end {
		margin-right: 24px;
	}

	.hscroll {
		display: flex;
		align-items: center;
		width: 39%;
		height: 14px;
		margin: 0 4px 0 8px;
		background: #e8eaef;
	}

	.hscroll button {
		width: 21px;
		flex: none;
	}

	.hscroll .lane {
		flex: 1;
	}

	.hscroll .thumb {
		display: block;
		width: 86%;
		height: 12px;
		border-radius: 6px;
		background: #d3d6de;
	}

	/* selection pane */
	.panel {
		width: 260px;
		flex: none;
		display: flex;
		flex-direction: column;
		box-sizing: border-box;
		padding: 6px 12px 25px 11px;
		border-left: 1px solid #dfe1e7;
		color: #3c465c;
	}

	.panel-head {
		display: flex;
		height: 18px;
		gap: 9px;
		margin: 0 -6px 0 -3px;
	}

	h2 {
		margin: 14px 0 8px;
		font-size: 14px;
		font-weight: 400;
		line-height: 18px;
	}

	.objects {
		flex: 1;
		border: 1px solid #dfe1e7;
		border-radius: 2px;
		background: #fff;
	}

	.order,
	.visibility {
		display: flex;
		align-items: center;
		gap: 10px;
		margin-top: 8px;
	}

	.order button,
	.visibility button {
		height: 23px;
		width: 23px;
		border: 1px solid #e2e4e9;
		background: #f8f9fb;
		color: #8d97aa;
	}

	.visibility button {
		width: 64px;
	}

	.rail {
		width: 44px;
		flex: none;
		display: flex;
		flex-direction: column;
		align-items: center;
		box-sizing: border-box;
		border-left: 1px solid #dfe1e7;
		padding-right: 1px;
	}

	.handle {
		width: 20px;
		height: 3px;
		margin: 11px 0 12px;
		border: solid #c5c9d0;
		border-width: 1px 0;
	}

	.rail > button {
		width: 32px;
		height: 32px;
		margin-bottom: 4px;
		border-radius: 2px;
	}

	.rail .on {
		background: #dadee6;
	}

	.rail .dim {
		color: #8f98a8;
	}

	.rail .mid {
		color: #55617b;
	}

	.rail-more {
		width: 38px;
		height: 43px;
		border-top: 1px solid #dfe1e7;
	}

	.rail-more button {
		width: 100%;
		height: 50px;
	}

	/* status bar */
	.status {
		display: flex;
		align-items: center;
		height: 28px;
		flex: none;
		box-sizing: border-box;
		border-top: 1px solid #dfe1e7;
		padding: 0 16px 0 12px;
	}

	.status > button,
	.views button {
		width: 24px;
		height: 24px;
		border-radius: 2px;
	}

	.status .on {
		background: #d9dee5;
	}

	.status .bar {
		height: 14px;
		margin: 0 10px;
	}

	.status .reading {
		width: 31px;
		gap: 1px;
	}

	.views {
		display: flex;
		gap: 2px;
	}

	.status .percent {
		width: 46px;
		gap: 3px;
	}

	.status .minus {
		width: 10px;
		height: 2px;
		margin: 0 12px 0 8px;
		background: #2c3750;
		border-radius: 0;
	}

	.status input {
		width: 183px;
		appearance: none;
		height: 1px;
		background: #2c3750;
	}

	/* overlays */
	.toast {
		position: absolute;
		right: 6px;
		bottom: 93px;
		width: 269px;
		height: 75px;
		box-sizing: border-box;
		padding: 9px 8px 11px 15px;
		display: flex;
		flex-direction: column;
		justify-content: space-between;
		background: #1c202b;
		border: 1px solid #11141c;
		box-shadow: 0 0 8px rgba(0, 0, 0, 0.4);
		z-index: 4;
	}

	.shield {
		position: absolute;
		left: 14px;
		top: -13px;
	}

	.toast .title {
		margin: 0 0 0 57px;
		font-size: 13px;
		color: #fff;
	}

	.title b {
		margin: 0 1px;
		font-weight: 400;
		color: #f5d92b;
	}

	.toast-close {
		position: absolute;
		right: 4px;
		top: 4px;
		color: #878c98;
	}

	.toast-foot {
		display: flex;
		align-items: center;
		justify-content: space-between;
		color: #747986;
	}

	.toast-foot button {
		width: 72px;
		height: 21px;
		background: #04c27b;
		color: #fff;
		font-weight: 500;
	}

	.ime {
		position: absolute;
		right: 0;
		bottom: 0;
		width: 171px;
		height: 29px;
		box-sizing: border-box;
		padding: 0 8px 0 4px;
		display: flex;
		align-items: center;
		justify-content: space-between;
		background: #fff;
		border: 1px solid #c3c5ca;
		color: #4d74f5;
		z-index: 4;
	}

	.ime span {
		font-size: 18px;
		font-weight: bold;
	}

	.ime text {
		font: bold 7px "Noto Sans", sans-serif;
		fill: #4d74f5;
	}

	.brand {
		position: absolute;
		right: 6px;
		bottom: 7px;
		display: flex;
		align-items: center;
		opacity: 0.72;
		z-index: 5;
		pointer-events: none;
	}

	.brand div {
		display: flex;
		flex-direction: column;
	}

	.brand strong {
		font-size: 21px;
		line-height: 24px;
		color: #2f83cb;
	}

	.brand em {
		font: bold 17px/20px "Liberation Sans", sans-serif;
		color: #34b055;
	}

	.pointers {
		position: absolute;
		left: 0;
		top: 0;
		z-index: 5;
		pointer-events: none;
		filter: drop-shadow(2px 3px 2px rgba(0, 0, 0, 0.45));
	}
</style>
